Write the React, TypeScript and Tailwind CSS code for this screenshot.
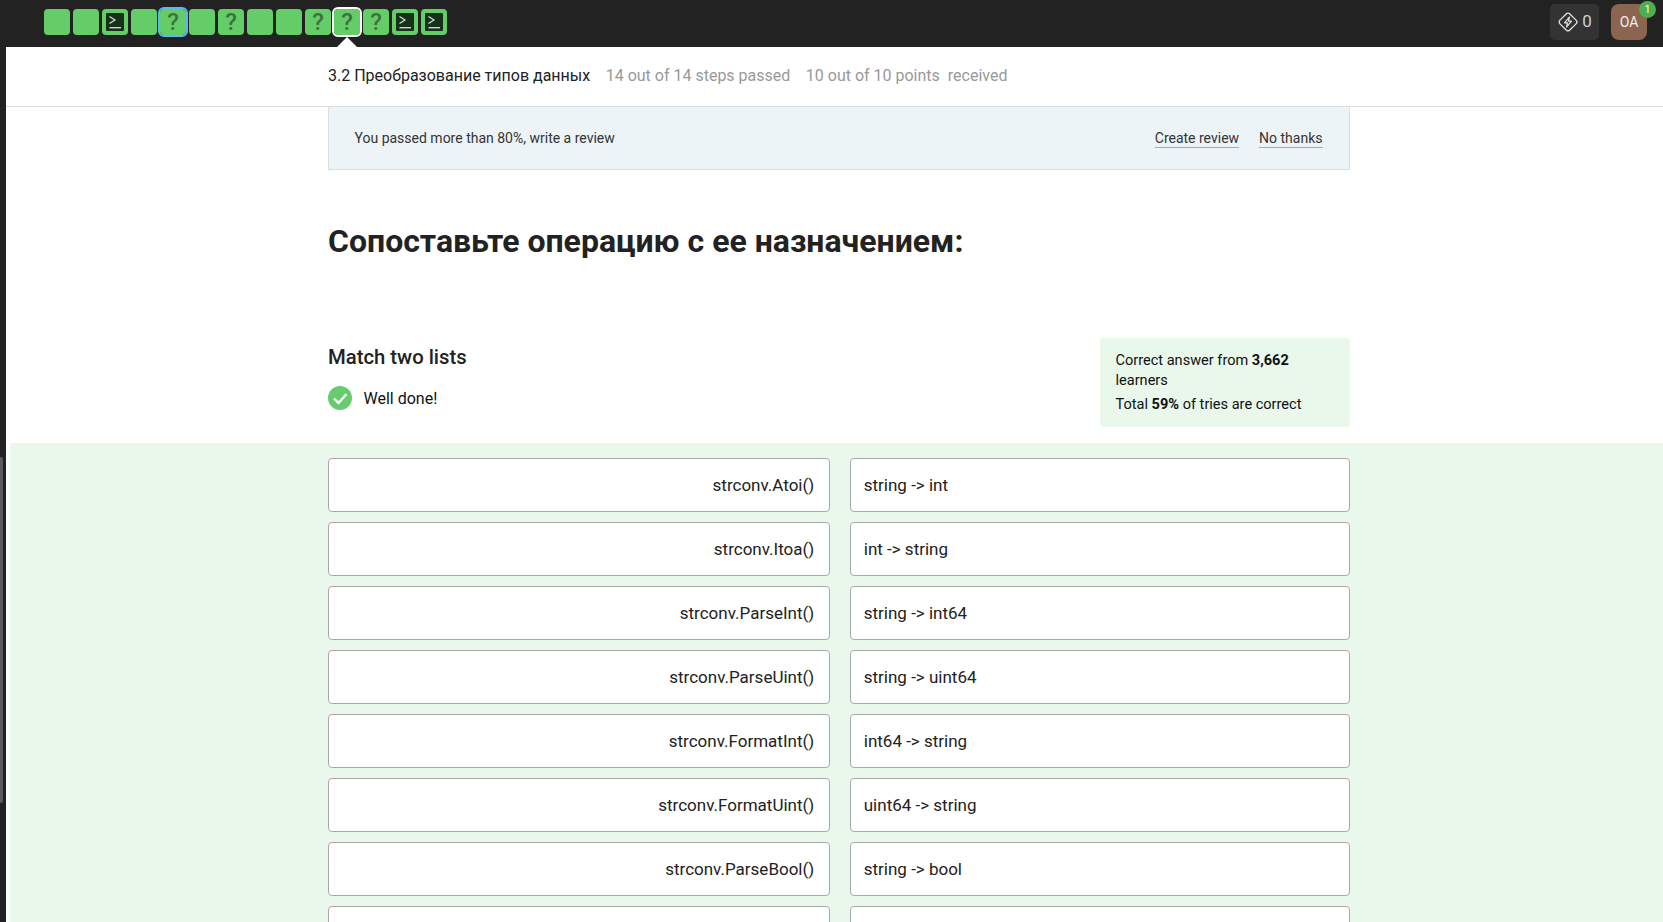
const squares: { kind: "blank" | "q" | "term"; state?: "blue" | "white" }[] = [
  { kind: "blank" },
  { kind: "blank" },
  { kind: "term" },
  { kind: "blank" },
  { kind: "q", state: "blue" },
  { kind: "blank" },
  { kind: "q" },
  { kind: "blank" },
  { kind: "blank" },
  { kind: "q" },
  { kind: "q", state: "white" },
  { kind: "q" },
  { kind: "term" },
  { kind: "term" },
];

const rows = [
  ["strconv.Atoi()", "string -> int"],
  ["strconv.Itoa()", "int -> string"],
  ["strconv.ParseInt()", "string -> int64"],
  ["strconv.ParseUint()", "string -> uint64"],
  ["strconv.FormatInt()", "int64 -> string"],
  ["strconv.FormatUint()", "uint64 -> string"],
  ["strconv.ParseBool()", "string -> bool"],
  ["", ""],
];

function Square({ kind, state }: { kind: "blank" | "q" | "term"; state?: "blue" | "white" }) {
  return (
    <div
      className={
        "relative flex h-[26px] w-[26px] items-center justify-center rounded-[4px] bg-[#64cd68] " +
        (state === "blue" ? "outline-2 outline-[#59b9f0] " : state === "white" ? "outline-2 outline-white " : "")
      }
    >
      {kind === "q" && <span className="text-[24px] font-medium leading-none text-[#41703f]">?</span>}
      {kind === "term" && (
        <svg width="18" height="18" viewBox="0 0 18 18">
          <rect width="18" height="18" rx="1" fill="#17301a" />
          <path d="M3.5 3.5 L9 7 L3.5 10.5" fill="none" stroke="#d8e4d8" strokeWidth="1.2" />
          <path d="M3.5 14.7 H15" fill="none" stroke="#d8e4d8" strokeWidth="1.3" />
        </svg>
      )}
      {state === "white" && (
        <div className="absolute left-[3px] top-[28px] h-0 w-0 border-x-[10px] border-b-[10px] border-x-transparent border-b-white" />
      )}
    </div>
  );
}

export default function App() {
  return (
    <div className="relative flex h-[922px] flex-col overflow-hidden bg-white font-['Roboto',sans-serif] text-[#222]">
      <header className="flex h-[47px] shrink-0 items-center justify-between bg-[#222222] pb-[3px] pl-[44px] pr-[16px]">
        <div className="flex gap-[3px]">
          {squares.map((s, i) => (
            <Square key={i} kind={s.kind} state={s.state} />
          ))}
        </div>
        <div className="flex items-center gap-[12px]">
          <div className="flex h-[36px] w-[49px] items-center justify-center gap-[3px] rounded-[5px] bg-[#333333] text-[17px] text-[#c8d2da]">
            <svg width="22" height="22" viewBox="0 0 22 22" fill="none">
              <rect x="4" y="4" width="14" height="14" rx="2.6" transform="rotate(45 11 11)" stroke="#e2e2e2" strokeWidth="1.3" />
              <path d="M12.5 6 L7.5 11.8 H10.5 L9.5 16 L14.5 10.2 H11.5 Z" fill="none" stroke="#dddddd" strokeWidth="1.2" strokeLinejoin="round" />
            </svg>
            <span>0</span>
          </div>
          <div className="relative flex h-[36px] w-[36px] items-center justify-center rounded-[8px] bg-[#8c6551] text-[14px] text-[#f2eeee]">
            OA
            <div className="absolute right-[-9px] top-[-3px] flex h-[17px] w-[17px] items-center justify-center rounded-full bg-[#4caf50] text-[10px] text-white">
              1
            </div>
          </div>
        </div>
      </header>

      <div className="flex min-h-0 flex-1">
        <div className="relative w-[6px] shrink-0 bg-[#222222]">
          <div className="absolute left-0 top-[410px] h-[346px] w-[3px] rounded-r-[2px] bg-[#5a5a5a]" />
        </div>
        <main className="min-w-0 flex-1">
          <div className="h-[60px] border-b border-[#dedede] pl-[322px]">
            <div className="flex h-[59px] items-center gap-[15.5px] pb-[2px] text-[16px]">
              <span>3.2 Преобразование типов данных</span>
              <span className="text-[#999999]">14 out of 14 steps passed</span>
              <span className="text-[#999999]">10 out of 10 points&nbsp; received</span>
            </div>
          </div>

          <div className="ml-[322px] flex h-[63px] w-[1022px] items-center justify-between border-x border-b border-[#dddddd] bg-[#edf4f8] pl-[25.5px] pr-[26.5px] text-[14px] text-[#333333]">
            <span>You passed more than 80%, write a review</span>
            <div className="flex gap-[20px]">
              <span className="border-b border-[#a9a9a9] leading-[18px]">Create review</span>
              <span className="border-b border-[#a9a9a9] leading-[18px]">No thanks</span>
            </div>
          </div>

          <h1 className="ml-[322px] mt-[50px] text-[32px] font-bold leading-[42px] text-[#222]">
            Сопоставьте операцию с ее назначением:
          </h1>

          <div className="ml-[322px] mt-[76px] flex h-[89px] w-[1022px] justify-between">
            <div>
              <h2 className="mt-[6px] text-[20.3px] font-medium leading-[26px]">Match two lists</h2>
              <div className="mt-[16px] flex items-center gap-[11.5px] text-[16px] text-[#111111]">
                <svg width="24" height="24" viewBox="0 0 24 24">
                  <circle cx="12" cy="12" r="12" fill="#66cc6e" />
                  <path d="M6 12.5 L10.5 17 L18.5 8" fill="none" stroke="#ffffff" strokeWidth="2.4" />
                </svg>
                <span className="relative top-[1px]">Well done!</span>
              </div>
            </div>
            <div className="w-[250px] rounded-[4px] bg-[#e9f8ea] pl-[15.5px] pr-[15px] pt-[13px] text-[14.55px] text-[#111111]">
              <p className="leading-[20px]">
                Correct answer from <b>3,662</b> learners
              </p>
              <p className="mt-[4px] leading-[20px]">
                Total <b>59%</b> of tries are correct
              </p>
            </div>
          </div>

          <section className="ml-[4px] mt-[16px] flex flex-col gap-[10px] bg-[#e9f8ea] pb-[20px] pl-[318px] pt-[15px]">
            {rows.map(([l, r], i) => (
              <div key={i} className="flex w-[1022px] gap-[20px] text-[17px] text-[#222]">
                <div className="flex h-[54px] flex-1 items-center justify-end rounded-[4px] border border-[#a8a8a8] bg-white pr-[15px] pt-[2px]">
                  {l}
                </div>
                <div className="flex h-[54px] flex-1 items-center rounded-[4px] border border-[#a8a8a8] bg-white pl-[12.5px] pt-[2px]">
                  {r}
                </div>
              </div>
            ))}
          </section>
        </main>
      </div>
    </div>
  );
}
